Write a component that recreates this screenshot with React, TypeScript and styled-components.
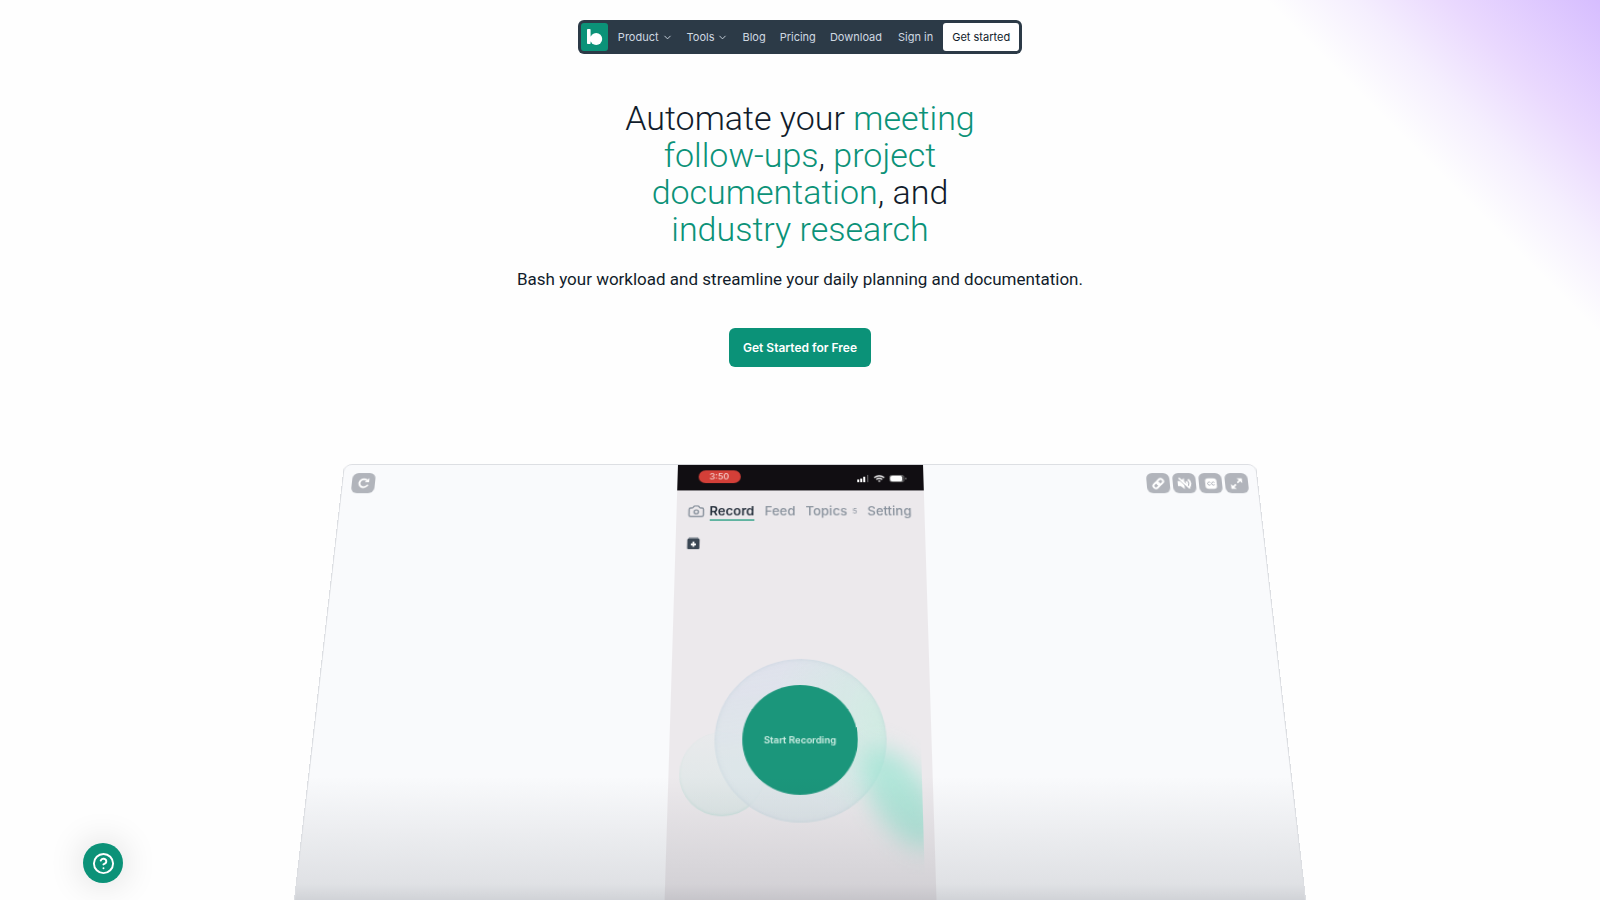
import React from "react";
import styled, { createGlobalStyle } from "styled-components";
import { Camera, ChevronDown, CircleHelp } from "lucide-react";

const green = "#0b9278";
const ink = "#111c2b";

const GlobalStyle = createGlobalStyle`
  *, *::before, *::after { box-sizing: border-box; }
  body { margin: 0; font-family: Inter, "Liberation Sans", sans-serif; color: ${ink}; background: #fefefe; }
  button { font: inherit; border: 0; padding: 0; cursor: pointer; }
  a { color: inherit; text-decoration: none; }
`;

const Page = styled.div`
  display: flex;
  flex-direction: column;
  align-items: center;
  height: 100vh;
  overflow: hidden;
  background: linear-gradient(
    225deg,
    #d6bdff 0,
    #ead9fe 108px,
    #f5effe 174px,
    #fefefe 236px
  );
`;

const NavBar = styled.nav`
  display: flex;
  align-items: center;
  margin-top: 20px;
  padding: 3px;
  height: 34px;
  border-radius: 6px;
  background: #2c3a47;
  color: #cfd8e2;
  font-size: 11px;
  line-height: 16px;
`;

const LogoLink = styled.a`
  display: flex;
  margin-right: 10px;
`;

const NavLinks = styled.div`
  display: flex;
  align-items: center;
  gap: 14px;
`;

const Account = styled.div`
  display: flex;
  align-items: center;
  gap: 10px;
  margin-left: 16px;
`;

const NavLink = styled.a`
  white-space: nowrap;
`;

const NavMenu = styled.button`
  display: flex;
  align-items: center;
  gap: 3px;
  background: none;
  color: inherit;
`;

const NavCta = styled.a`
  padding: 6px 9px;
  border-radius: 3px;
  background: #fff;
  color: ${ink};
  white-space: nowrap;
`;

const Hero = styled.header`
  display: flex;
  flex-direction: column;
  align-items: center;
  padding: 46px 24px 97px;
  font-family: Roboto, "Liberation Sans", sans-serif;
  text-align: center;
`;

const Title = styled.h1`
  margin: 0;
  font-size: 34px;
  font-weight: 300;
  line-height: 37px;
`;

const Accent = styled.span`
  color: ${green};
`;

const Subtitle = styled.p`
  margin: 19px 0 37px;
  font-size: 17px;
  line-height: 24px;
`;

const HeroCta = styled.a`
  padding: 10px 14px;
  border-radius: 6px;
  background: ${green};
  color: #fff;
  font-family: Inter, "Liberation Sans", sans-serif;
  font-size: 12px;
  font-weight: 600;
  line-height: 19px;
`;

const Stage = styled.main`
  flex: 1;
  display: flex;
  justify-content: center;
  align-items: flex-start;
  width: 100%;
  min-height: 0;
`;

const Player = styled.section`
  position: relative;
  display: grid;
  grid-template-columns: 1fr auto 1fr;
  width: 912px;
  max-width: 92vw;
  flex: none;
  overflow: hidden;
  border: 1px solid #dcdee2;
  border-radius: 8px;
  background: #f9fafc;
  transform: perspective(1850px) rotateX(25deg);
  transform-origin: top center;

  &::after {
    content: "";
    position: absolute;
    inset: 0;
    pointer-events: none;
    background: linear-gradient(
      rgba(17, 24, 39, 0) 318px,
      rgba(17, 24, 39, 0.06) 372px,
      rgba(17, 24, 39, 0.11) 418px,
      rgba(17, 24, 39, 0.18) 434px
    );
  }
`;

const Controls = styled.div<{ $end?: boolean }>`
  display: flex;
  justify-content: ${(p) => (p.$end ? "flex-end" : "flex-start")};
  align-items: flex-start;
  gap: 3px;
  padding: 9px;
`;

const Control = styled.button`
  display: grid;
  place-items: center;
  width: 23px;
  height: 22px;
  border-radius: 6px;
  background: #b1b4bb;
  color: #fff;
`;

const Phone = styled.div`
  display: flex;
  flex-direction: column;
  width: 245px;
  height: 540px;
  background: #ece9ec;
`;

const StatusBar = styled.div`
  display: flex;
  align-items: center;
  justify-content: space-between;
  height: 28px;
  padding: 0 16px 2px 21px;
  background: #110e12;
  color: #fff;
`;

const Clock = styled.span`
  width: 42px;
  border-radius: 7px;
  background: #d33f38;
  color: #f6d5d2;
  font-size: 9px;
  font-weight: 500;
  line-height: 14px;
  text-align: center;
`;

const StatusIcons = styled.svg`
  margin-top: 4px;
`;

const Tabs = styled.div`
  display: flex;
  align-items: center;
  gap: 10px;
  padding: 14px 10px 0 11px;
  color: #89929d;
`;

const Tab = styled.button<{ $active?: boolean }>`
  display: flex;
  align-items: center;
  gap: 5px;
  background: none;
  color: ${(p) => (p.$active ? "#27313d" : "#89929d")};
  border-bottom: 2px solid ${(p) => (p.$active ? "#5fb3a0" : "transparent")};
  font-size: 13px;
  font-weight: ${(p) => (p.$active ? 600 : 500)};
  line-height: 17px;
`;

const Count = styled.small`
  font-size: 8px;
  font-weight: 400;
`;

const CameraButton = styled.button`
  display: flex;
  margin-right: -5px;
  padding-bottom: 2px;
  background: none;
  color: #89929d;
`;

const ArchiveButton = styled.button`
  display: flex;
  align-self: flex-start;
  margin: 17px 0 0 11px;
  background: none;
`;

const Recorder = styled.div`
  position: relative;
  display: grid;
  place-items: center;
  height: 158px;
  margin: 113px 10px 0 0;
  padding-left: 10px;
`;

const Bubble = styled.span`
  position: absolute;
  left: 10px;
  top: 72px;
  width: 80px;
  height: 80px;
  border-radius: 50%;
  background: linear-gradient(rgba(225, 236, 236, 0.3), rgba(218, 230, 229, 0.8));
  box-shadow: inset 0 -1px 2px rgba(170, 215, 205, 0.4);
`;

const Ring = styled.span`
  position: relative;
  grid-area: 1 / 1;
  width: 161px;
  height: 158px;
  border-radius: 50%;
  background:
    radial-gradient(circle at 98% 36%, rgba(208, 235, 226, 0.95), rgba(208, 235, 226, 0) 56%),
    linear-gradient(170deg, rgba(222, 224, 236, 0.95), rgba(220, 229, 233, 0.85) 50%);
  box-shadow: inset 0 0 4px rgba(180, 200, 210, 0.5);
`;

const GlowClip = styled.span`
  position: absolute;
  right: 0;
  top: 60px;
  width: 100px;
  height: 160px;
  overflow: hidden;
  pointer-events: none;

  &::before {
    content: "";
    position: absolute;
    left: 54px;
    top: 20px;
    width: 52px;
    height: 108px;
    border-radius: 50%;
    background: #a3e5d5;
    opacity: 0.8;
    filter: blur(11px);
    transform: rotate(-32deg);
  }
`;

const RecordButton = styled.button`
  position: relative;
  grid-area: 1 / 1;
  width: 108px;
  height: 106px;
  border-radius: 50%;
  background: #1b967b;
  color: #cfeee4;
  font-size: 9px;
  font-weight: 600;
`;

const HelpButton = styled.button`
  position: fixed;
  left: 83px;
  bottom: 17px;
  display: grid;
  place-items: center;
  width: 40px;
  height: 40px;
  border-radius: 50%;
  background: ${green};
  color: #fff;
  box-shadow: 0 0 36px rgba(0, 0, 0, 0.16);
`;

const Logo = () => (
  <svg width="27" height="28" viewBox="0 0 27 28" aria-hidden="true">
    <rect width="27" height="28" rx="3" fill={green} />
    <rect x="6" y="6" width="3.600" height="15" rx="0.800" fill="#fff" />
    <circle cx="15.200" cy="16" r="6" fill="#fff" />
    <rect x="8" y="13.500" width="4" height="5" fill="#fff" />
  </svg>
);

const glyph = {
  width: 13,
  height: 13,
  viewBox: "0 0 16 16",
  fill: "none",
  stroke: "currentColor",
  strokeWidth: 2,
  "aria-hidden": true,
} as const;

const Restart = () => (
  <svg {...glyph} width={14} height={14}>
    <path d="M12.500 10A5 5 0 1 1 11.500 4.600" strokeWidth="2.200" />
    <path d="M13.800 1.800v5h-5z" fill="currentColor" stroke="none" />
  </svg>
);

const LinkGlyph = () => (
  <svg {...glyph}>
    <g transform="rotate(-45 8 8)" strokeWidth="2.400">
      <rect x="0.500" y="5" width="8.500" height="6" rx="3" />
      <rect x="7" y="5" width="8.500" height="6" rx="3" />
    </g>
  </svg>
);

const Muted = () => (
  <svg {...glyph} width={15} height={15}>
    <path d="M1 5h3l4-3.500v13L4 11H1z" fill="currentColor" stroke="none" />
    <path d="M10 5.500q2 2.500 0 5M12.300 3q4 5 0 10" strokeWidth="2" />
    <path d="M1.500 2.500l11 12" stroke="#b1b4bb" strokeWidth="1" />
    <path d="M2.500 1.500l11 12" strokeWidth="1.800" />
  </svg>
);

const Captions = () => (
  <svg {...glyph} width={14} height={13}>
    <rect x="1" y="1" width="14" height="14" rx="4" fill="currentColor" stroke="none" />
    <path d="M7.300 6.600a2 2 0 1 0 0 2.800M12.300 6.600a2 2 0 1 0 0 2.800" stroke="#a4a8b0" strokeWidth="1.200" />
  </svg>
);

const Expand = () => (
  <svg {...glyph}>
    <path d="M9 7l4-4M7 9l-4 4" strokeWidth="2" />
    <path d="M8.500 1H15v6.500zM1 8.500V15h6.500z" fill="currentColor" stroke="none" />
  </svg>
);

const Archive = () => (
  <svg width="13" height="13" viewBox="0 0 13 13" aria-hidden="true">
    <path d="M2 0.500h9l1 2H1z" fill="#7f8791" />
    <rect x="0.500" y="2" width="12" height="11" rx="1" fill="#3a4653" />
    <path d="M6.500 5v5.500M4 8h5" stroke="#fff" strokeWidth="1.800" />
  </svg>
);

export default function App() {
  return (
    <>
      <GlobalStyle />
      <Page>
        <NavBar aria-label="Main">
          <LogoLink href="#" aria-label="Home">
            <Logo />
          </LogoLink>
          <NavLinks>
            <NavMenu type="button">
              Product <ChevronDown size={11} strokeWidth={2} />
            </NavMenu>
            <NavMenu type="button">
              Tools <ChevronDown size={11} strokeWidth={2} />
            </NavMenu>
            <NavLink href="#blog">Blog</NavLink>
            <NavLink href="#pricing">Pricing</NavLink>
            <NavLink href="#download">Download</NavLink>
          </NavLinks>
          <Account>
            <NavLink href="#signin">Sign in</NavLink>
            <NavCta href="#start">Get started</NavCta>
          </Account>
        </NavBar>

        <Hero>
          <Title>
            Automate your <Accent>meeting</Accent>
            <br />
            <Accent>follow-ups</Accent>, <Accent>project</Accent>
            <br />
            <Accent>documentation</Accent>, and
            <br />
            <Accent>industry research</Accent>
          </Title>
          <Subtitle>Bash your workload and streamline your daily planning and documentation.</Subtitle>
          <HeroCta href="#start">Get Started for Free</HeroCta>
        </Hero>

        <Stage>
          <Player aria-label="Product demo">
            <Controls>
              <Control type="button" aria-label="Restart"><Restart /></Control>
            </Controls>
            <Phone>
              <StatusBar>
                <Clock>3:50</Clock>
                <StatusIcons width="50" height="10" viewBox="0 0 50 10" fill="#fff" aria-hidden="true">
                  <rect x="0" y="6" width="2" height="3" />
                  <rect x="3" y="5" width="2" height="4" />
                  <rect x="6" y="3" width="2" height="6" />
                  <rect x="10" y="1" width="1" height="8" opacity="0.4" />
                  <path d="M17 4q5-4 10 0M19 6q3-2.500 6 0" fill="none" stroke="#fff" strokeWidth="1.400" />
                  <path d="M20.500 7.200h3L22 9z" />
                  <rect x="32.500" y="1.500" width="14" height="7" rx="2" fill="none" stroke="#777" />
                  <rect x="33" y="2" width="12" height="6" rx="1.500" />
                  <rect x="48" y="4" width="1" height="2" opacity="0.5" />
                </StatusIcons>
              </StatusBar>
              <Tabs>
                <CameraButton type="button" aria-label="Camera"><Camera size={17} strokeWidth={2} /></CameraButton>
                <Tab type="button" $active>Record</Tab>
                <Tab type="button">Feed</Tab>
                <Tab type="button">Topics<Count>5</Count></Tab>
                <Tab type="button">Setting</Tab>
              </Tabs>
              <ArchiveButton type="button" aria-label="Archive"><Archive /></ArchiveButton>
              <Recorder>
                <Bubble />
                <Ring />
                <GlowClip />
                <RecordButton type="button">Start Recording</RecordButton>
              </Recorder>
            </Phone>
            <Controls $end>
              <Control type="button" aria-label="Copy link"><LinkGlyph /></Control>
              <Control type="button" aria-label="Unmute"><Muted /></Control>
              <Control type="button" aria-label="Captions"><Captions /></Control>
              <Control type="button" aria-label="Full screen"><Expand /></Control>
            </Controls>
          </Player>
        </Stage>
      </Page>
      <HelpButton type="button" aria-label="Help">
        <CircleHelp size={23} strokeWidth={2} />
      </HelpButton>
    </>
  );
}
